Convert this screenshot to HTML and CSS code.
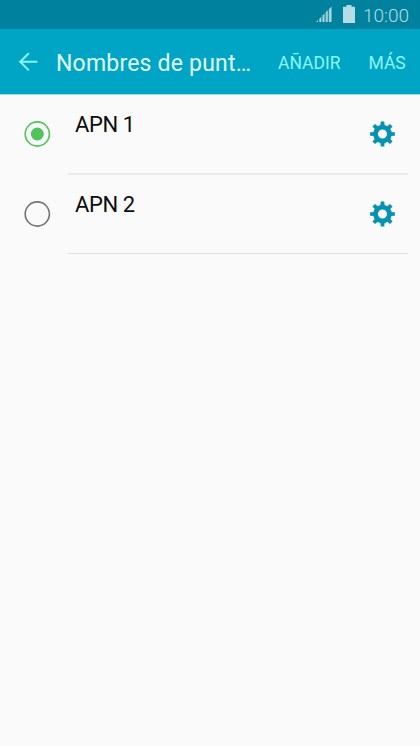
FILE: index.html
```html
<!DOCTYPE html>
<html lang="es">
<head>
<meta charset="utf-8">
<title>Nombres de puntos de acceso</title>
<link rel="stylesheet" href="styles.css">
</head>
<body>
<svg class="defs" aria-hidden="true">
  <symbol id="gear" viewBox="-12.5 -13 26 26">
    <circle r="6.9" fill="none" stroke="currentColor" stroke-width="4.8"/>
    <g fill="currentColor">
      <path id="teeth" d="M-2.1 -8L-1.8 -12.4H1.8L2.1 -8V-6H-2.1ZM-2.1 8L-1.8 12.4H1.8L2.1 8V6H-2.1ZM-8 -2.1L-12.4 -1.8V1.8L-8 2.1H-6V-2.1ZM8 -2.1L12.4 -1.8V1.8L8 2.1H6V-2.1Z"/>
      <use href="#teeth" transform="rotate(45)"/>
    </g>
  </symbol>
</svg>
<div class="status">
  <svg class="signal" viewBox="0 0 16 16"><path d="M0 16l2-2v2zM3.3 16v-3.3l2.1-2v5.3zM6.5 16V9.5l2.1-2V16zM9.7 16V6.3l2.1-2V16zM12.8 16V3.2L15.6 .4V16z"/></svg>
  <svg class="battery" viewBox="0 0 12 18"><path d="M3.5 0h5v1.8H12V18H0V1.8h3.5z"/></svg>
  <span class="clock">10:00</span>
</div>
<header class="bar">
  <svg class="back" viewBox="0 0 20 20"><path d="M19.3 9.8H2.2M10.8 1.2L2.2 9.8l8.6 8.6"/></svg>
  <h1 class="title">Nombres de punt…</h1>
  <span class="action">AÑADIR</span>
  <span class="action more">MÁS</span>
</header>
<main class="list">
  <div class="row">
    <svg class="radio on" viewBox="0 0 27 27"><circle class="ring" cx="13.3" cy="13" r="12.1"/><circle class="dot" cx="13.3" cy="13" r="6.5"/></svg>
    <div class="item"><span class="name">APN 1</span><svg class="gear"><use href="#gear"/></svg></div>
  </div>
  <div class="row">
    <svg class="radio" viewBox="0 0 27 27"><circle class="ring" cx="13.3" cy="13" r="12.1"/></svg>
    <div class="item"><span class="name">APN 2</span><svg class="gear"><use href="#gear"/></svg></div>
  </div>
</main>
</body>
</html>
```
FILE: styles.css
```css
* { box-sizing: border-box; }
body {
  margin: 0;
  min-height: 746px;
  background: #fafafa;
  font-family: Roboto, sans-serif;
  color: #0c0c0e;
}
.defs { display: none; }
.status {
  display: flex;
  height: 29px;
  padding-left: 316px;
  background: #00819d;
  color: #b5dde5;
}
.signal { width: 16px; height: 16px; margin-top: 6px; fill: #a3d4de; }
.battery { width: 12px; height: 18px; margin: 5px 0 0 11px; fill: #b5dde5; }
.clock { margin-left: 8px; font-size: 19px; line-height: 31px; font-weight: 300; }
.bar {
  display: flex;
  height: 66px;
  padding-left: 18px;
  background: #00a5c5;
  border-bottom: 1px solid #a2dce9;
}
.back {
  width: 20px;
  height: 20px;
  margin-top: 23px;
  fill: none;
  stroke: #8cf5f7;
  stroke-width: 2;
}
.title {
  width: 240px;
  margin: 0;
  padding-left: 18px;
  font-size: 23px;
  font-weight: 400;
  letter-spacing: 0.2px;
  line-height: 69px;
  white-space: nowrap;
  color: #e0f9fc;
}
.action { font-size: 17.5px; line-height: 68px; white-space: nowrap; color: #8cf5f7; }
.more { margin-left: 28px; }
.list { margin-top: -1px; }
.row { display: flex; height: 80px; padding: 0 12px 0 24px; }
.radio { width: 27px; height: 27px; margin-top: 27px; }
.ring { fill: none; stroke: #747474; stroke-width: 1.6; }
.on .ring { stroke: #50c45a; }
.dot { fill: #50c45a; }
.item {
  display: flex;
  flex: 1;
  justify-content: space-between;
  margin-left: 17px;
  padding: 0 12px 0 7px;
  border-bottom: 1px solid #dedede;
}
.row:first-child .item { height: 81px; border-bottom: 2px solid #ebebeb; }
.name { font-size: 22px; line-height: 61px; letter-spacing: -0.4px; }
.gear { width: 26px; height: 26px; margin-top: 27px; color: #0792b0; }
```
